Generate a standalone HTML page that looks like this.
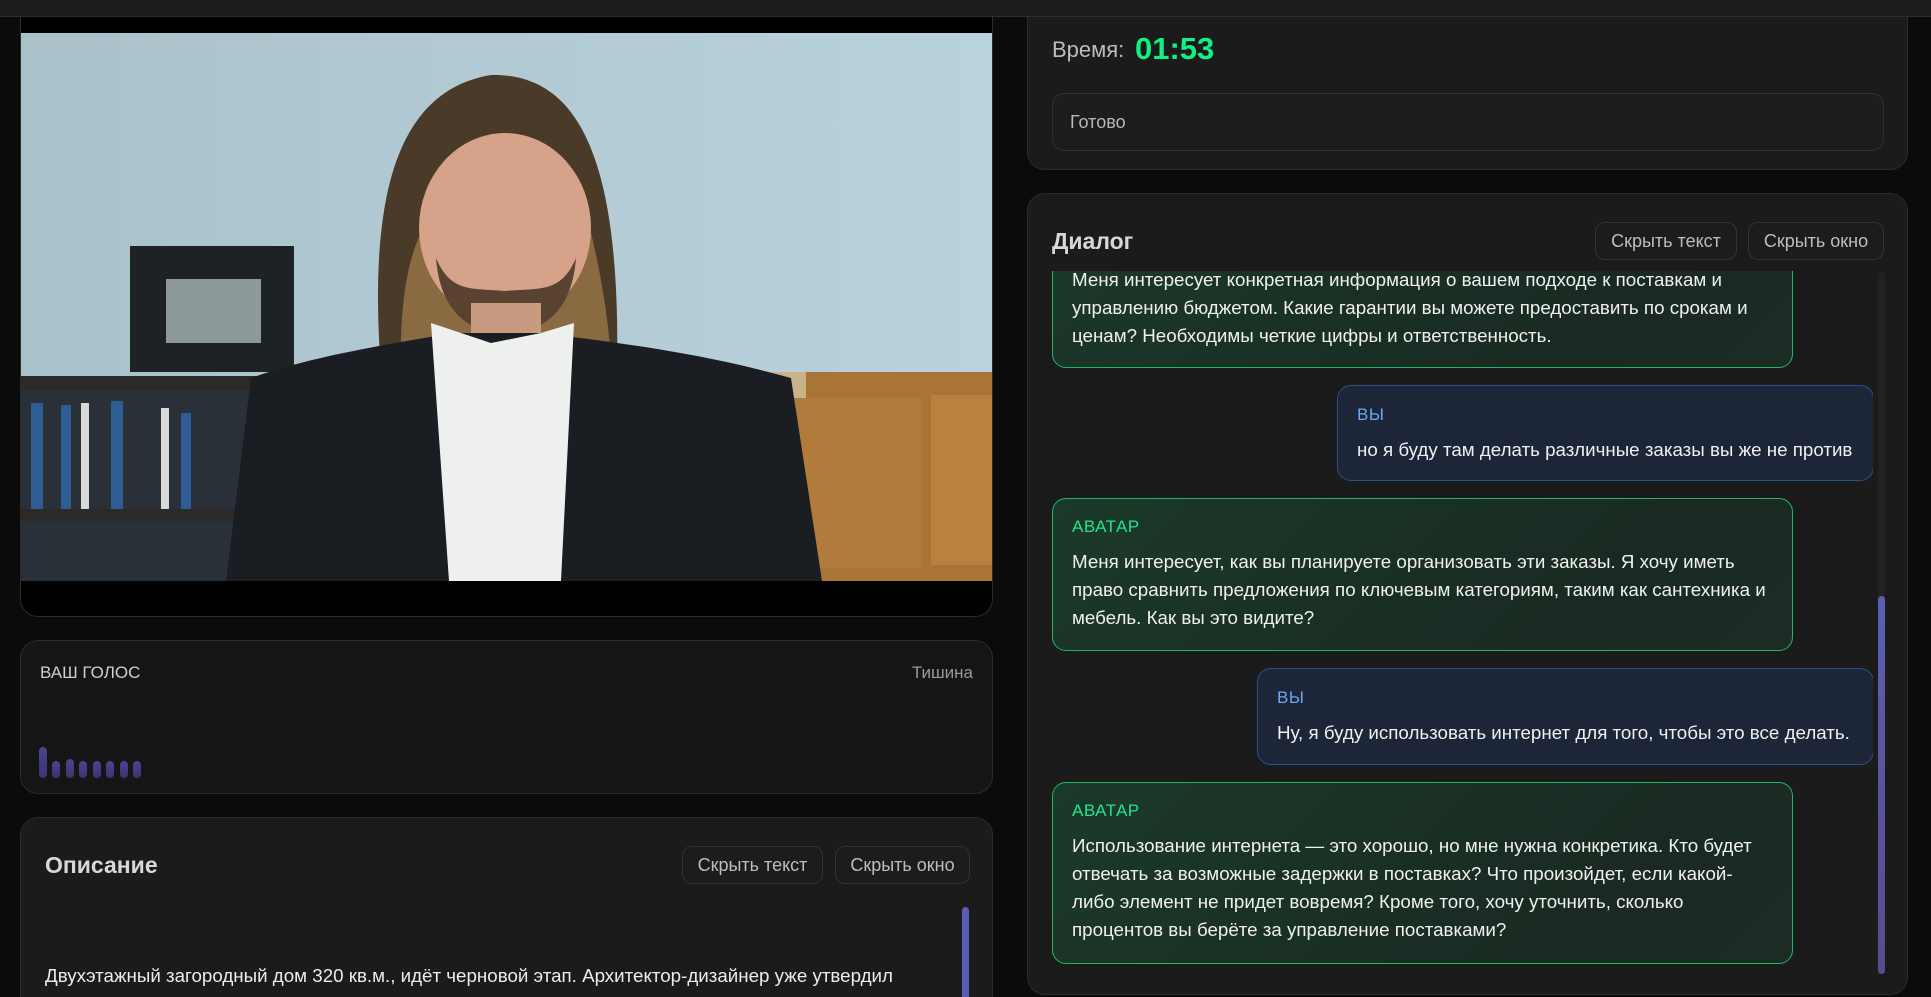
<!DOCTYPE html>
<html style="overflow:hidden"><head><meta charset="utf-8">
<style>
*{box-sizing:border-box;margin:0;padding:0}
html,body{width:1931px;height:997px;overflow:hidden}
body{background:#0b0b0b;font-family:"Liberation Sans",Arial,sans-serif;color:#e8e8e8}
#root{position:relative;width:1931px;height:997px;overflow:hidden}
.top{position:absolute;left:0;top:0;width:1931px;height:17px;background:#1c1c1c;border-bottom:1px solid #2e2e2e;z-index:5}
.card{position:absolute;background:#1b1b1b;border:1px solid #2b2b2b;border-radius:18px}
.btn{position:absolute;height:38px;border:1px solid #333;border-radius:10px;background:#1c1c1c;color:#bdbdbd;font-size:18px;line-height:36px;text-align:center}
.msg{position:absolute;border-radius:14px;padding:0 19px;font-size:18.75px;line-height:28px;color:#f0f0f0}
.av{background:linear-gradient(135deg,#1b3a2a,#1a2a22 70%,#1c2b24);border:1px solid #1fb865}
.you{background:#1c2638;border:1px solid #2a4f8a}
.lab{font-size:17px;letter-spacing:.5px}
.av .lab{color:#22e38d}
.you .lab{color:#6ea6f0}
.bar{position:absolute;width:8px;border-radius:4px;background:linear-gradient(#4a4590,#3b3570)}
</style></head><body><div id="root">
<div class="top"></div>

<div style="position:absolute;left:20px;top:17px;width:973px;height:600px;background:#000;border:1px solid #2b2b2b;border-top:none;border-radius:0 0 18px 18px;overflow:hidden">
<svg style="position:absolute;left:0;top:16px" width="973" height="548" viewBox="0 0 973 548" preserveAspectRatio="none">
<defs><linearGradient id="w" x1="0" x2="1"><stop offset="0" stop-color="#a9c1c9"/><stop offset=".6" stop-color="#b3ccd6"/><stop offset="1" stop-color="#b9d3de"/></linearGradient></defs>
<rect width="973" height="548" fill="url(#w)"/>
<rect x="109" y="213" width="164" height="126" fill="#1d2325"/>
<rect x="145" y="246" width="95" height="64" fill="#8e9a9a"/>
<rect x="0" y="343" width="240" height="14" fill="#2b2a28"/>
<rect x="0" y="357" width="230" height="191" fill="#2a3038"/>
<g fill="#2d5d93"><rect x="10" y="370" width="12" height="106"/><rect x="40" y="372" width="10" height="104"/><rect x="90" y="368" width="12" height="108"/><rect x="160" y="380" width="10" height="96"/></g>
<g fill="#d9d9d9"><rect x="60" y="370" width="8" height="106"/><rect x="140" y="375" width="8" height="101"/></g>
<rect x="0" y="476" width="220" height="12" fill="#2b2a28"/>
<rect x="720" y="339" width="253" height="209" fill="#a87536"/>
<rect x="725" y="339" width="60" height="209" fill="#c9b48a"/>
<rect x="770" y="365" width="130" height="170" fill="#b17b3c"/>
<rect x="910" y="362" width="63" height="170" fill="#b98040"/>
<path d="M360 339 C350 200 360 60 470 42 C560 40 600 130 596 339 Z" fill="#4a3a28"/>
<path d="M380 339 C378 260 390 220 400 200 L570 200 C580 240 590 300 590 339 Z" fill="#8a6a40"/>
<ellipse cx="484" cy="195" rx="86" ry="95" fill="#d6a289"/>
<path d="M415 225 C420 290 460 300 484 300 C510 300 550 290 555 225 C540 260 520 255 484 258 C450 255 430 260 415 225Z" fill="#5a4230"/>
<rect x="450" y="270" width="70" height="40" fill="#c89a80"/>
<path d="M205 548 L230 345 C300 320 380 310 430 300 L520 300 C600 310 680 320 770 345 L801 548 Z" fill="#1a1d22"/>
<path d="M410 290 L470 310 L520 300 L553 290 L540 548 L428 548 Z" fill="#eef0f0"/>
</svg>
</div>

<div class="card" style="left:20px;top:640px;width:973px;height:154px;background:#151515">
<div style="position:absolute;left:19px;top:22px;font-size:17px;color:#cfcfcf">ВАШ ГОЛОС</div>
<div style="position:absolute;right:19px;top:22px;font-size:17px;color:#9a9a9a">Тишина</div>
<div class="bar" style="left:18px;top:106px;height:31px"></div>
<div class="bar" style="left:31px;top:120px;height:17px"></div>
<div class="bar" style="left:45px;top:118px;height:19px"></div>
<div class="bar" style="left:58px;top:120px;height:17px"></div>
<div class="bar" style="left:72px;top:120px;height:17px"></div>
<div class="bar" style="left:85px;top:120px;height:17px"></div>
<div class="bar" style="left:99px;top:120px;height:17px"></div>
<div class="bar" style="left:112px;top:120px;height:17px"></div>
</div>

<div class="card" style="left:20px;top:817px;width:973px;height:200px">
<div style="position:absolute;left:24px;top:34px;font-size:23px;font-weight:bold;color:#d8d8d8">Описание</div>
<div class="btn" style="left:661px;top:28px;width:141px">Скрыть текст</div>
<div class="btn" style="left:814px;top:28px;width:135px">Скрыть окно</div>
<div style="position:absolute;left:941px;top:89px;width:7px;height:120px;border-radius:4px;background:#5a5db3"></div>
<div style="position:absolute;left:24px;top:147px;font-size:18.75px;color:#ececec;white-space:nowrap">Двухэтажный загородный дом 320 кв.м., идёт черновой этап. Архитектор-дизайнер уже утвердил</div>
</div>

<div class="card" style="left:1027px;top:-20px;width:881px;height:190px">
<div style="position:absolute;left:24px;top:56px;font-size:22px;color:#bdbdbd">Время:</div>
<div style="position:absolute;left:107px;top:50px;font-size:31px;font-weight:bold;color:#12f084">01:53</div>
<div style="position:absolute;left:24px;top:112px;width:832px;height:58px;border:1px solid #303030;border-radius:12px;background:#1d1d1d;font-size:18px;color:#b8b8b8;line-height:56px;padding-left:17px">Готово</div>
</div>

<div class="card" style="left:1027px;top:193px;width:881px;height:802px">
<div style="position:absolute;left:24px;top:34px;font-size:23px;font-weight:bold;color:#d8d8d8">Диалог</div>
<div class="btn" style="left:567px;top:28px;width:142px">Скрыть текст</div>
<div class="btn" style="left:720px;top:28px;width:136px">Скрыть окно</div>
<div style="position:absolute;left:850px;top:78px;width:7px;height:702px;border-radius:4px;background:#222"></div>
<div style="position:absolute;left:850px;top:402px;width:7px;height:378px;border-radius:4px;background:linear-gradient(#5a5fb0,#5b4a90)"></div>
<div style="position:absolute;left:0;top:77px;width:845px;height:703px;overflow:hidden">
 <div class="msg av" style="left:24px;top:-72px;width:741px;height:169px;padding-top:66px">Меня интересует конкретная информация о вашем подходе к поставкам и управлению бюджетом. Какие гарантии вы можете предоставить по срокам и ценам? Необходимы четкие цифры и ответственность.</div>
 <div class="msg you" style="left:309px;top:114px;width:537px;height:96px;padding-top:15px"><div class="lab">ВЫ</div><div style="margin-top:7px">но я буду там делать различные заказы вы же не против</div></div>
 <div class="msg av" style="left:24px;top:227px;width:741px;height:153px;padding-top:14px"><div class="lab">АВАТАР</div><div style="margin-top:7px">Меня интересует, как вы планируете организовать эти заказы. Я хочу иметь право сравнить предложения по ключевым категориям, таким как сантехника и мебель. Как вы это видите?</div></div>
 <div class="msg you" style="left:229px;top:397px;width:617px;height:97px;padding-top:15px"><div class="lab">ВЫ</div><div style="margin-top:7px">Ну, я буду использовать интернет для того, чтобы это все делать.</div></div>
 <div class="msg av" style="left:24px;top:511px;width:741px;height:182px;padding-top:14px"><div class="lab">АВАТАР</div><div style="margin-top:7px">Использование интернета — это хорошо, но мне нужна конкретика. Кто будет отвечать за возможные задержки в поставках? Что произойдет, если какой-либо элемент не придет вовремя? Кроме того, хочу уточнить, сколько процентов вы берёте за управление поставками?</div></div>
</div>
</div>
</div></body></html>
